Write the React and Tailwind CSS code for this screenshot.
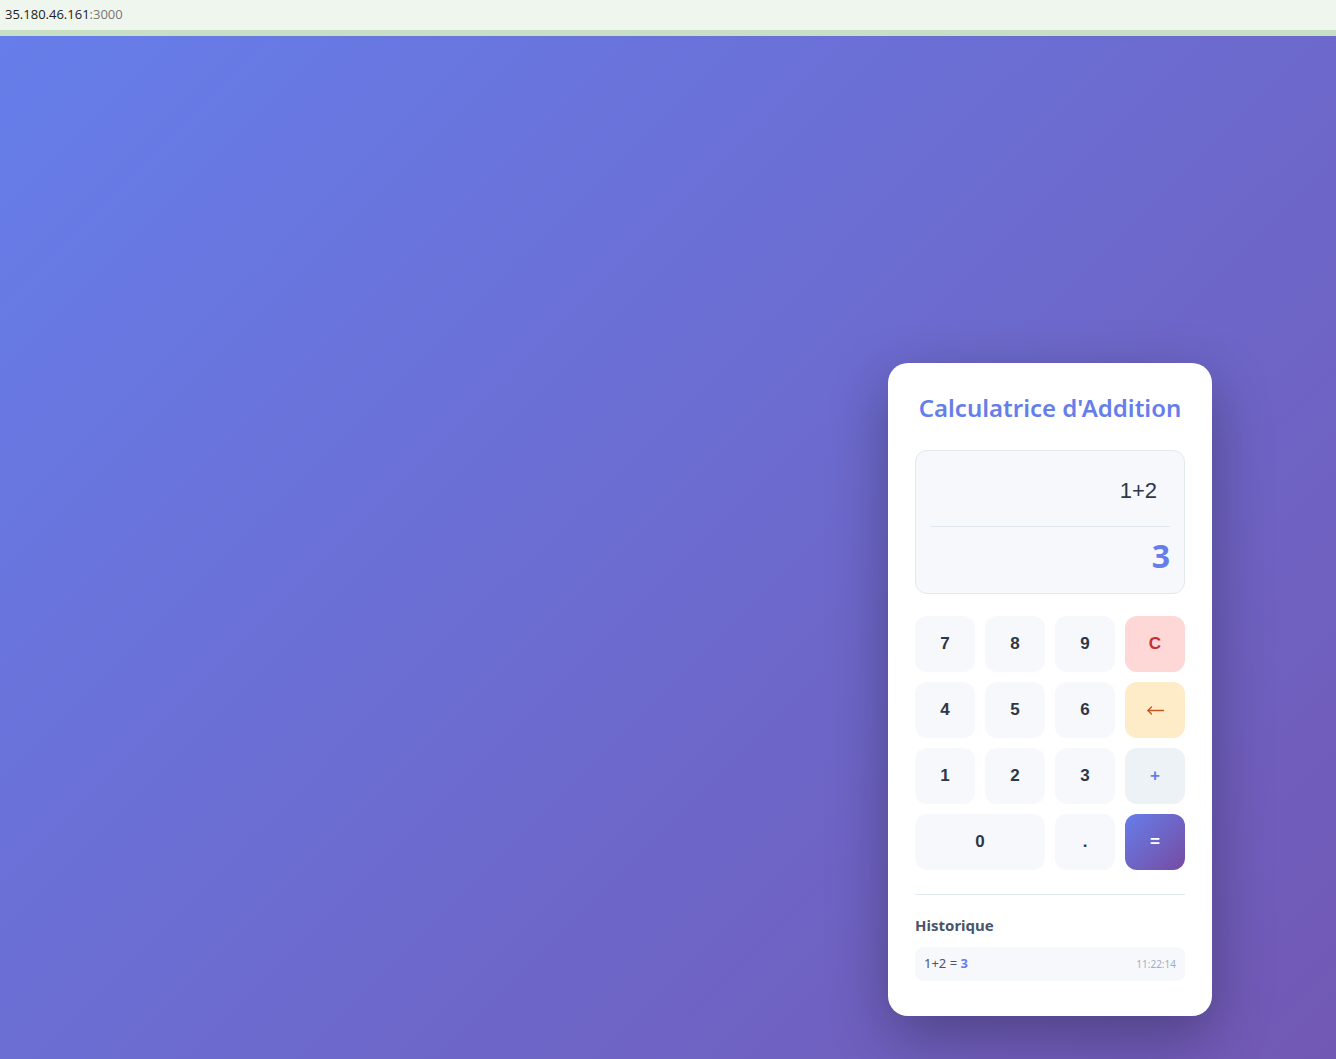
import React, { useState } from 'react';

const BackArrow = () => (
    <svg width="17" height="9" viewBox="0 0 17 9" fill="none" stroke="currentColor" strokeWidth="1.3" strokeLinecap="round" strokeLinejoin="round">
        <path d="M1 4.5H16.5" />
        <path d="M4.5 1L1 4.5L4.5 8" />
    </svg>
);

const keys = [
    { label: '7' }, { label: '8' }, { label: '9' }, { label: 'C', kind: 'clear' },
    { label: '4' }, { label: '5' }, { label: '6' }, { label: 'back', kind: 'back' },
    { label: '1' }, { label: '2' }, { label: '3' }, { label: '+', kind: 'op' },
    { label: '0', wide: true }, { label: '.' }, { label: '=', kind: 'eq' },
];

const keyStyle = (kind) => {
    if (kind === 'clear') return 'bg-[#fed7d7] text-[#c53030]';
    if (kind === 'back') return 'bg-[#feebc8] text-[#c05621] pt-[1px]';
    if (kind === 'op') return 'bg-[#edf2f7] text-[#667eea]';
    if (kind === 'eq') return 'bg-[linear-gradient(135deg,#667eea_0%,#764ba2_100%)] text-white';
    return 'bg-[#f7f8fc] text-[#2d3748]';
};

const App = () => {
    const [expr] = useState('1+2');
    const [result] = useState('3');

    return (
        <div className="min-h-screen font-['Noto_Sans',sans-serif]">
            {/* Address bar */}
            <div className="flex h-[30px] items-center bg-[#eff6ee] px-[5px] text-[13px] font-['Open_Sans',sans-serif]">
                <span className="text-[#222]">35.180.46.161</span>
                <span className="text-[#767676]">:3000</span>
            </div>
            <div className="h-[6px] bg-[#c7dfc5]" />

            {/* Page */}
            <div className="flex h-[1023px] justify-end bg-[linear-gradient(135deg,#667eea_0%,#764ba2_135%)] pr-[124px] pt-[327px]">
                <div className="flex h-[653px] w-[324px] flex-col rounded-[20px] bg-white px-[27px] pt-[27px] shadow-[0_20px_60px_rgba(0,0,0,0.3)]">
                    <h1 className="text-center text-[24px] font-semibold leading-[36px] text-[#667eea]">
                        Calculatrice d'Addition
                    </h1>

                    {/* Display */}
                    <div className="mt-[24px] h-[144px] rounded-[12px] border border-[#e2e8f0] bg-[#f7f8fc] px-[14px]">
                        <div className="flex h-[76px] items-center justify-end border-b border-[#e2e8f0] pr-[13px] pt-[4px] font-['Liberation_Sans',sans-serif] text-[22px] text-[#2d3748]">
                            {expr}
                        </div>
                        <div className="flex h-[57px] items-center justify-end pt-[1px] text-[32px] font-bold text-[#667eea]">
                            {result}
                        </div>
                    </div>

                    {/* Keypad */}
                    <div className="mt-[22px] grid grid-cols-4 gap-[10px]">
                        {keys.map((k) => (
                            <button
                                key={k.label}
                                className={`flex h-[56px] items-center justify-center rounded-[12px] font-['Liberation_Sans',sans-serif] text-[17px] font-bold ${k.wide ? 'col-span-2' : ''} ${keyStyle(k.kind)}`}
                            >
                                {k.kind === 'back' ? <BackArrow /> : k.label}
                            </button>
                        ))}
                    </div>

                    {/* History */}
                    <div className="mt-[24px] border-t border-[#e2e8f0] pt-[19px]">
                        <h3 className="text-[15px] font-bold leading-[22px] text-[#4a5568]">Historique</h3>
                        <div className="mt-[11px] flex h-[34px] items-center justify-between rounded-[8px] bg-[#f7f8fc] px-[9px]">
                            <span className="text-[13px] text-[#4a5568]">
                                1+2 = <span className="font-bold text-[#667eea]">3</span>
                            </span>
                            <span className="text-[10px] text-[#a0aec0]">11:22:14</span>
                        </div>
                    </div>
                </div>
            </div>
        </div>
    );
};

export default App;
